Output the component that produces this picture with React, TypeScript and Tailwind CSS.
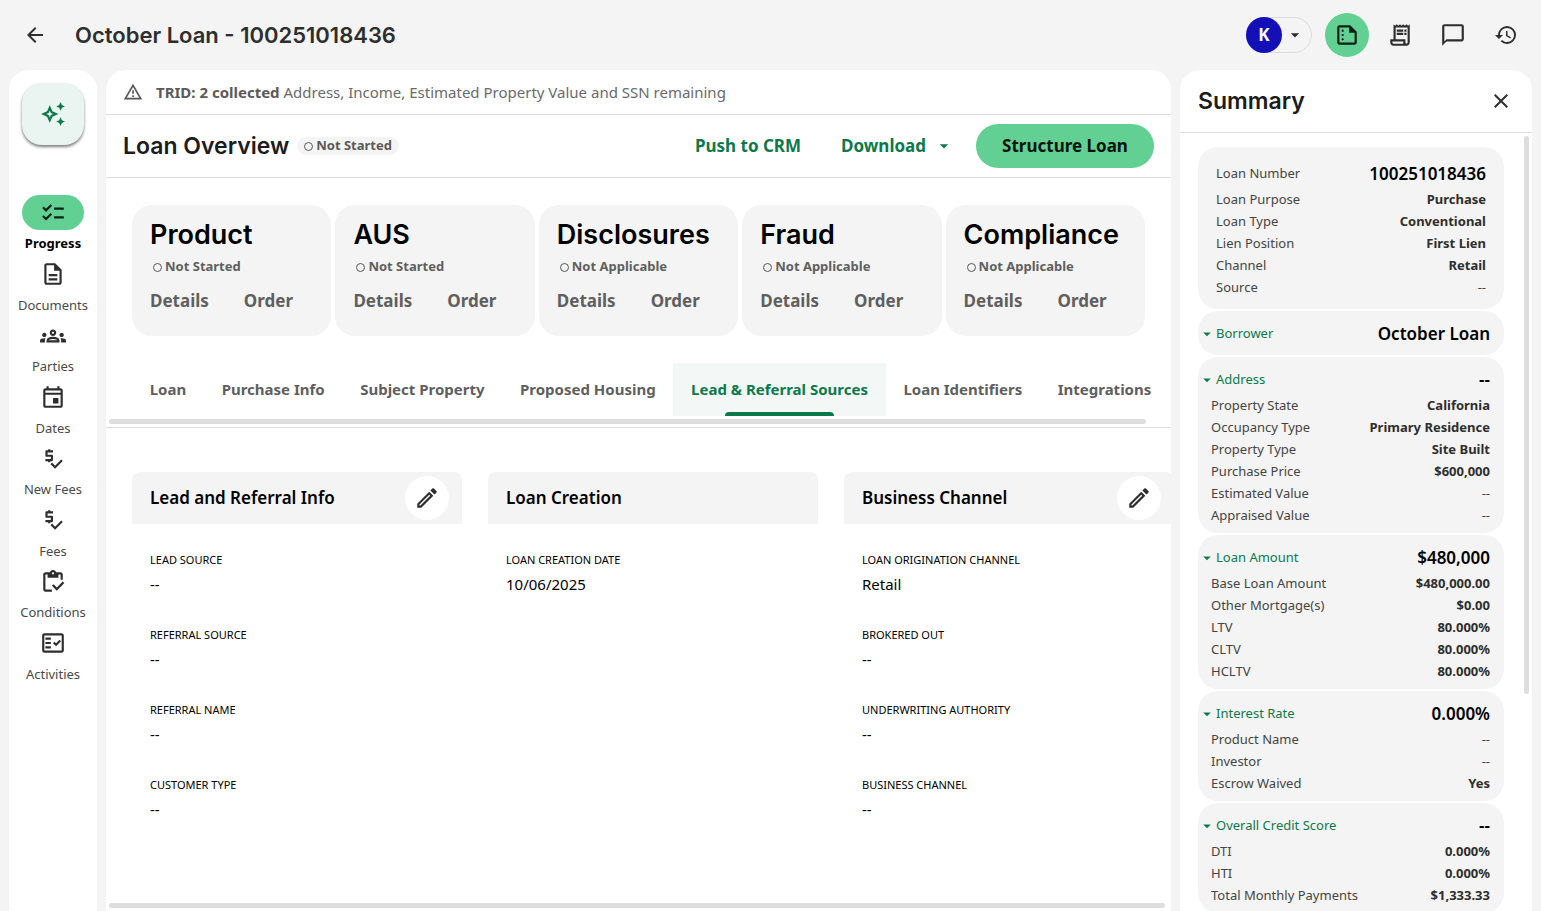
import { useState } from 'react'
import type { IconType } from 'react-icons'
import {
  MdArrowBack,
  MdArrowDropDown,
  MdChecklist,
  MdClose,
  MdHistory,
  MdOutlineAutoAwesome,
  MdOutlineChatBubbleOutline,
  MdOutlineDescription,
  MdOutlineEdit,
  MdOutlineEvent,
  MdOutlineFactCheck,
  MdOutlineGroups,
  MdOutlineInventory,
  MdOutlineReceiptLong,
  MdOutlineSummarize,
  MdOutlineWarningAmber,
  MdPriceCheck,
} from 'react-icons/md'

type Row = [label: string, value: string]

const NAV: { label: string; icon: IconType }[] = [
  { label: 'Progress', icon: MdChecklist },
  { label: 'Documents', icon: MdOutlineDescription },
  { label: 'Parties', icon: MdOutlineGroups },
  { label: 'Dates', icon: MdOutlineEvent },
  { label: 'New Fees', icon: MdPriceCheck },
  { label: 'Fees', icon: MdPriceCheck },
  { label: 'Conditions', icon: MdOutlineInventory },
  { label: 'Activities', icon: MdOutlineFactCheck },
]

const STATUS_CARDS = [
  { title: 'Product', status: 'Not Started' },
  { title: 'AUS', status: 'Not Started' },
  { title: 'Disclosures', status: 'Not Applicable' },
  { title: 'Fraud', status: 'Not Applicable' },
  { title: 'Compliance', status: 'Not Applicable' },
]

const TABS = [
  'Loan',
  'Purchase Info',
  'Subject Property',
  'Proposed Housing',
  'Lead & Referral Sources',
  'Loan Identifiers',
  'Integrations',
]

const PANELS: { title: string; editable: boolean; fields: Row[] }[] = [
  {
    title: 'Lead and Referral Info',
    editable: true,
    fields: [
      ['Lead Source', '--'],
      ['Referral Source', '--'],
      ['Referral Name', '--'],
      ['Customer Type', '--'],
    ],
  },
  {
    title: 'Loan Creation',
    editable: false,
    fields: [['Loan Creation Date', '10/06/2025']],
  },
  {
    title: 'Business Channel',
    editable: true,
    fields: [
      ['Loan Origination Channel', 'Retail'],
      ['Brokered Out', '--'],
      ['Underwriting Authority', '--'],
      ['Business Channel', '--'],
    ],
  },
]

const LOAN_ROWS: Row[] = [
  ['Loan Purpose', 'Purchase'],
  ['Loan Type', 'Conventional'],
  ['Lien Position', 'First Lien'],
  ['Channel', 'Retail'],
  ['Source', '--'],
]

const SECTIONS: { title: string; value: string; rows: Row[] }[] = [
  { title: 'Borrower', value: 'October Loan', rows: [] },
  {
    title: 'Address',
    value: '--',
    rows: [
      ['Property State', 'California'],
      ['Occupancy Type', 'Primary Residence'],
      ['Property Type', 'Site Built'],
      ['Purchase Price', '$600,000'],
      ['Estimated Value', '--'],
      ['Appraised Value', '--'],
    ],
  },
  {
    title: 'Loan Amount',
    value: '$480,000',
    rows: [
      ['Base Loan Amount', '$480,000.00'],
      ['Other Mortgage(s)', '$0.00'],
      ['LTV', '80.000%'],
      ['CLTV', '80.000%'],
      ['HCLTV', '80.000%'],
    ],
  },
  {
    title: 'Interest Rate',
    value: '0.000%',
    rows: [
      ['Product Name', '--'],
      ['Investor', '--'],
      ['Escrow Waived', 'Yes'],
    ],
  },
  {
    title: 'Overall Credit Score',
    value: '--',
    rows: [
      ['DTI', '0.000%'],
      ['HTI', '0.000%'],
      ['Total Monthly Payments', '$1,333.33'],
    ],
  },
]

function StatusDot() {
  return <span className="size-[9px] shrink-0 rounded-full border border-[#555]" />
}

function SummaryRow({ row: [label, value] }: { row: Row }) {
  return (
    <div className="flex h-[22px] items-center justify-between">
      <dt className="text-[#444]">{label}</dt>
      <dd className={value === '--' ? 'text-[#444]' : 'font-bold text-[#2e2e2e]'}>{value}</dd>
    </div>
  )
}

function TopBar() {
  return (
    <header className="flex h-[70px] shrink-0 items-center justify-between pr-[13px] pl-[23px]">
      <div className="flex items-center gap-7">
        <button aria-label="Back">
          <MdArrowBack className="size-6" />
        </button>
        <h1 className="font-[Inter,sans-serif] text-[22px] font-semibold">October Loan - 100251018436</h1>
      </div>
      <div className="flex items-center gap-[9px]">
        <button
          aria-label="Account"
          className="mr-1 flex h-9 w-[66px] items-center rounded-full border border-[#dcdcdc]"
        >
          <span className="-ml-px flex size-9 items-center justify-center rounded-full bg-[#1410b8] text-[17px] font-bold text-white">
            K
          </span>
          <MdArrowDropDown className="ml-[3px] size-5" />
        </button>
        <button
          aria-label="Summary"
          className="flex size-11 items-center justify-center rounded-full bg-[#62d093] text-[#0b2014]"
        >
          <MdOutlineSummarize className="size-[26px]" />
        </button>
        <button aria-label="Receipts" className="flex size-11 items-center justify-center">
          <MdOutlineReceiptLong className="size-[26px]" />
        </button>
        <button aria-label="Messages" className="flex size-11 items-center justify-center">
          <MdOutlineChatBubbleOutline className="size-[26px]" />
        </button>
        <button aria-label="History" className="flex size-11 items-center justify-center">
          <MdHistory className="size-6" />
        </button>
      </div>
    </header>
  )
}

function SideNav() {
  const [current, setCurrent] = useState('Progress')

  return (
    <div className="flex w-[88px] shrink-0 flex-col items-center rounded-t-[20px] bg-white pt-[13px]">
      <button
        aria-label="Assistant"
        className="mb-[50px] flex size-[62px] shrink-0 items-center justify-center rounded-[20px] bg-[#eaf4f1] text-[#0b7a4b] shadow-[0_2px_3px_rgba(0,0,0,0.5)]"
      >
        <MdOutlineAutoAwesome className="size-[26px]" />
      </button>
      <nav className="flex h-[492px] w-full shrink-0 flex-col justify-between">
        {NAV.map(({ label, icon: Icon }) => {
          const active = label === current
          return (
            <button
              key={label}
              onClick={() => setCurrent(label)}
              className={`flex h-[61px] w-full flex-col items-center text-[13px] ${
                active ? 'font-bold text-black' : 'text-[#4a4a4a]'
              }`}
            >
              <span
                className={`flex h-[35px] w-[62px] items-center justify-center rounded-full ${
                  active ? 'bg-[#62d093] text-[#0b2014]' : 'text-[#2e2e2e]'
                }`}
              >
                <Icon className="size-[26px]" />
              </span>
              <span className="leading-[26px]">{label}</span>
            </button>
          )
        })}
      </nav>
    </div>
  )
}

function StatusCard({ title, status }: { title: string; status: string }) {
  return (
    <section className="h-[131px] rounded-[20px] bg-[#f4f4f4] px-[18px] pt-[14px]">
      <h3 className="font-[Inter,sans-serif] text-[27px] leading-8 font-semibold text-black">{title}</h3>
      <div className="mt-1.5 flex h-5 items-center gap-[3px] pl-[3px] text-[13px] font-bold text-[#5f5f5f]">
        <StatusDot />
        {status}
      </div>
      <div className="mt-3 flex gap-[35px] text-[17px] leading-6 font-bold text-[#5f5f5f]">
        <button>Details</button>
        <button>Order</button>
      </div>
    </section>
  )
}

function LoanOverview() {
  const [tab, setTab] = useState('Lead & Referral Sources')

  return (
    <main className="flex min-w-0 flex-1 flex-col overflow-hidden rounded-t-[20px] bg-white">
      <div className="flex h-[45px] shrink-0 items-center border-b border-[#dcdcdc] px-[17px] text-[15px] text-[#6a6a6a]">
        <MdOutlineWarningAmber className="mr-[13px] size-5 text-[#555]" />
        <p>
          <strong className="text-[#5a5a5a]">TRID: 2 collected</strong> Address, Income, Estimated Property
          Value and SSN remaining
        </p>
      </div>

      <div className="flex h-[63px] shrink-0 items-center justify-between border-b border-[#dcdcdc] px-[17px]">
        <div className="flex items-center gap-2">
          <h2 className="font-[Inter,sans-serif] text-[23px] font-semibold text-[#1c1c1c]">Loan Overview</h2>
          <span className="flex h-[18px] items-center gap-[3px] rounded-full bg-[#f4f4f4] px-[7px] text-[13px] font-bold text-[#5a5a5a]">
            <StatusDot />
            Not Started
          </span>
        </div>
        <div className="flex items-center text-[17px] font-bold text-[#0b7a4b]">
          <button className="mr-10">Push to CRM</button>
          <button className="mr-[22px] flex items-center gap-2">
            Download
            <MdArrowDropDown className="size-5" />
          </button>
          <button className="h-11 w-[178px] rounded-full bg-[#62d093] text-[#06150c]">Structure Loan</button>
        </div>
      </div>

      <div className="mx-[26px] mt-[27px] grid shrink-0 grid-cols-5 gap-1">
        {STATUS_CARDS.map((card) => (
          <StatusCard key={card.title} {...card} />
        ))}
      </div>

      <div className="mt-[27px] shrink-0 border-b border-[#dcdcdc] pb-[3px]">
        <div role="tablist" className="mr-[2px] ml-[26px] flex h-[53px]">
          {TABS.map((t) => (
            <button
              key={t}
              role="tab"
              aria-selected={t === tab}
              onClick={() => setTab(t)}
              className={`flex flex-auto flex-col items-center px-4 text-[15px] font-bold whitespace-nowrap ${
                t === tab ? 'bg-[#f3f8f6] text-[#0b7a4b]' : 'text-[#5f5f5f]'
              }`}
            >
              <span className="pt-1 leading-[45px]">{t}</span>
              {t === tab && <span className="h-1 w-3/5 rounded-t bg-[#0b7a4b]" />}
            </button>
          ))}
        </div>
        <div className="mt-[3px] mr-[25px] ml-[3px] h-[5px] rounded-full bg-[#dedede]" />
      </div>

      <div className="mt-11 ml-[26px] flex min-h-0 flex-1 gap-[26px]">
        {PANELS.map((panel) => (
          <section key={panel.title} className="w-[330px] shrink-0">
            <div className="flex h-[52px] items-center justify-between rounded-t-lg bg-[#f4f4f4] pr-[13px] pl-[18px]">
              <h3 className="text-[17px] font-semibold text-black">{panel.title}</h3>
              {panel.editable && (
                <button
                  aria-label={`Edit ${panel.title}`}
                  className="flex size-11 items-center justify-center rounded-full bg-white"
                >
                  <MdOutlineEdit className="size-[26px]" />
                </button>
              )}
            </div>
            <dl className="px-[18px] pt-[26px] text-black">
              {panel.fields.map(([label, value]) => (
                <div key={label} className="h-[75px]">
                  <dt className="text-[11px] leading-5 uppercase">{label}</dt>
                  <dd className="pt-[2px] text-[15px] leading-6">{value}</dd>
                </div>
              ))}
            </dl>
          </section>
        ))}
      </div>
      <div className="mr-[6px] mb-[3px] ml-[3px] h-[5px] shrink-0 rounded-full bg-[#dedede]" />
    </main>
  )
}

function Summary() {
  return (
    <aside className="flex w-[352px] shrink-0 flex-col overflow-hidden rounded-t-[20px] bg-white">
      <div className="flex h-[63px] shrink-0 items-center justify-between border-b border-[#dcdcdc] pr-[19px] pl-[18px]">
        <h2 className="font-[Inter,sans-serif] text-[23px] font-semibold text-[#1c1c1c]">Summary</h2>
        <button aria-label="Close summary">
          <MdClose className="size-6" />
        </button>
      </div>
      <div className="flex min-h-0 flex-1 justify-between pr-[3px] pl-[18px]">
        <div className="flex w-[306px] flex-col gap-[2px] overflow-hidden pt-[14px] text-[13px]">
          <dl className="shrink-0 rounded-[20px] bg-[#f4f4f4] px-[18px] pt-3 pb-2.5">
            <div className="flex h-[30px] items-center justify-between">
              <dt className="text-[#444]">Loan Number</dt>
              <dd className="text-[17px] font-semibold text-black">100251018436</dd>
            </div>
            {LOAN_ROWS.map((row) => (
              <SummaryRow key={row[0]} row={row} />
            ))}
          </dl>
          {SECTIONS.map(({ title, value, rows }) => (
            <section key={title} className="shrink-0 rounded-[20px] bg-[#f4f4f4] pt-2 pr-[14px] pb-1.5 pl-[13px]">
              <div className="flex h-[30px] items-center justify-between">
                <button className="-ml-[13px] flex items-center text-[#0b7a4b]">
                  <MdArrowDropDown className="size-[18px]" />
                  {title}
                </button>
                <span className="text-[17px] font-semibold text-black">{value}</span>
              </div>
              <dl>
                {rows.map((row) => (
                  <SummaryRow key={row[0]} row={row} />
                ))}
              </dl>
            </section>
          ))}
        </div>
        <div className="mt-[3px] h-[558px] w-[5px] rounded-full bg-[#dedede]" />
      </div>
    </aside>
  )
}

export default function App() {
  return (
    <div className="flex h-screen flex-col overflow-hidden bg-[#f4f4f4] font-['Noto_Sans',sans-serif] text-[#2e2e2e]">
      <TopBar />
      <div className="flex min-h-0 flex-1 gap-[9px] px-[9px]">
        <SideNav />
        <LoanOverview />
        <Summary />
      </div>
    </div>
  )
}
